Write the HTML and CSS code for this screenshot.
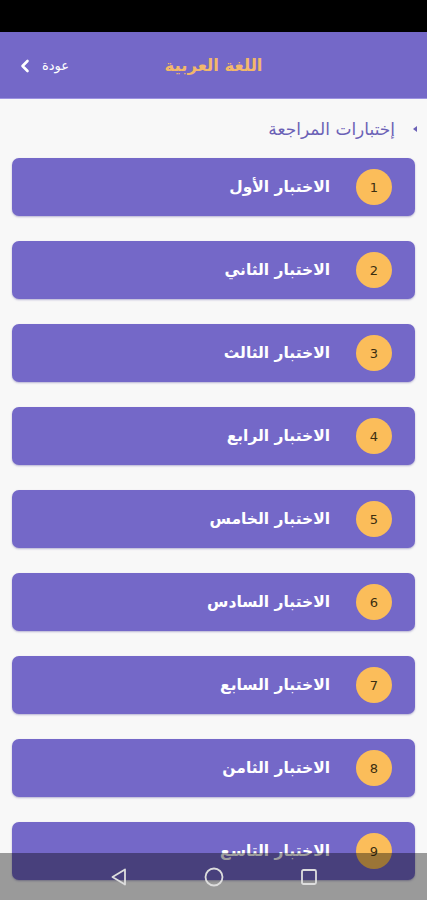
FILE: index.html
```html
<!doctype html>
<html lang="ar" dir="rtl">
<head>
<title>اللغة العربية</title>
<meta charset="utf-8">
<link rel="stylesheet" href="styles.css">
</head>
<body>

<div class="status"></div>

<div class="hdr">
  <h1>اللغة العربية</h1>
  <a class="back" href="#">
    <span>عودة</span>
    <svg width="10" height="14" viewBox="0 0 10 14"><path d="M7.5 2 L2.5 7 L7.5 12" fill="none" stroke="#fff" stroke-width="2.6" stroke-linecap="round" stroke-linejoin="round"/></svg>
  </a>
</div>

<div class="sect"><b></b>إختبارات المراجعة</div>

<div class="list">
  <a class="card" href="#"><i>1</i><span>الاختبار الأول</span></a>
  <a class="card" href="#"><i>2</i><span>الاختبار الثاني</span></a>
  <a class="card" href="#"><i>3</i><span>الاختبار الثالث</span></a>
  <a class="card" href="#"><i>4</i><span>الاختبار الرابع</span></a>
  <a class="card" href="#"><i>5</i><span>الاختبار الخامس</span></a>
  <a class="card" href="#"><i>6</i><span>الاختبار السادس</span></a>
  <a class="card" href="#"><i>7</i><span>الاختبار السابع</span></a>
  <a class="card" href="#"><i>8</i><span>الاختبار الثامن</span></a>
  <a class="card" href="#"><i>9</i><span>الاختبار التاسع</span></a>
</div>

<div class="nav">
  <svg width="20" height="20" viewBox="0 0 20 20"><path d="M16 2.5 L3.5 10 L16 17.5 Z" fill="none" stroke="#ddd" stroke-width="1.8" stroke-linejoin="round"/></svg>
  <svg width="20" height="20" viewBox="0 0 20 20"><circle cx="10" cy="10" r="8.5" fill="none" stroke="#ddd" stroke-width="1.8"/></svg>
  <svg width="20" height="20" viewBox="0 0 20 20"><rect x="3" y="3" width="14" height="14" rx="1.5" fill="none" stroke="#ddd" stroke-width="1.8"/></svg>
</div>

</body>
</html>
```

FILE: styles.css
```css
BODY {
  margin: 0;
  padding: 0;
  width: 427px;
  height: 900px;
  overflow: hidden;
  background: #f8f8f8;
  font-family: "DejaVu Sans", "Noto Sans", sans-serif;
}
.status {
  height: 32px;
  background: #000;
}
.hdr {
  height: 66px;
  background: #7468c8;
  display: flex;
  align-items: center;
  justify-content: center;
  position: relative;
  border-bottom: solid 1px #9d93e0;
}
.hdr H1 {
  margin: 0;
  font-size: 16.5px;
  font-weight: bold;
  color: #f2b86a;
}
.back {
  position: absolute;
  left: 20px;
  top: 26px;
  display: flex;
  align-items: center;
  gap: 12px;
  color: #fff;
  font-size: 13px;
  text-decoration: none;
}
.sect {
  display: flex;
  align-items: center;
  gap: 14px;
  padding: 17px 10px 0 0;
  height: 26px;
  color: #6b61b6;
  font-size: 17px;
}
.sect B {
  width: 0;
  height: 0;
  border-top: 3px solid transparent;
  border-bottom: 3px solid transparent;
  border-right: 4px solid #6b61b6;
  margin-left: 4px;
}
.list {
  display: flex;
  flex-direction: column;
  gap: 25px;
  padding: 16px 12px 0 12px;
}
.card {
  height: 58px;
  flex: none;
  background: #7468c8;
  border-radius: 7px;
  box-shadow: 0 1px 2px rgba(60,50,140,0.35);
  display: flex;
  align-items: center;
  padding-right: 23px;
  gap: 26px;
  text-decoration: none;
}
.card I {
  width: 36px;
  height: 36px;
  border-radius: 50%;
  background: #fbbd5a;
  color: #3b2e10;
  font-style: normal;
  font-size: 13px;
  display: flex;
  align-items: center;
  justify-content: center;
}
.card SPAN {
  color: #fff;
  font-size: 15.5px;
  font-weight: bold;
}
.nav {
  position: fixed;
  left: 0;
  right: 0;
  bottom: 0;
  height: 47px;
  background: rgba(0,0,0,0.38);
  display: flex;
  direction: ltr;
  align-items: center;
  justify-content: center;
  gap: 75px;
}
```
